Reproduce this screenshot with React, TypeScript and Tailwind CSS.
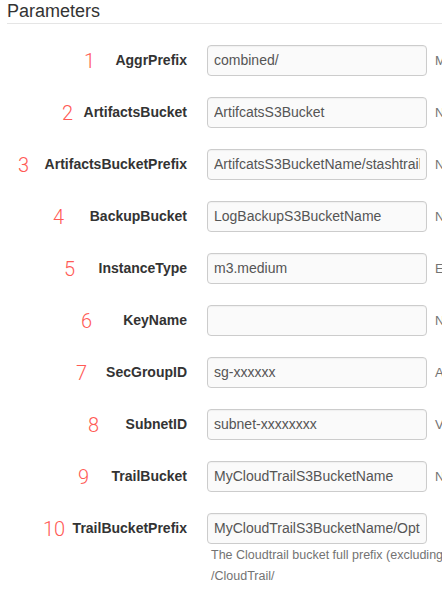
import React from "react";

type Row = { n: string; nx: number; label: string; value: string; help: string };

const rows: Row[] = [
  { n: "1", nx: 84, label: "AggrPrefix", value: "combined/", help: "Must end with a slash" },
  { n: "2", nx: 62, label: "ArtifactsBucket", value: "ArtifcatsS3Bucket", help: "Name of the artifacts bucket" },
  { n: "3", nx: 18, label: "ArtifactsBucketPrefix", value: "ArtifcatsS3BucketName/stashtrail/", help: "Name of the artifacts prefix" },
  { n: "4", nx: 53, label: "BackupBucket", value: "LogBackupS3BucketName", help: "Name of the backup bucket" },
  { n: "5", nx: 64, label: "InstanceType", value: "m3.medium", help: "EC2 instance type" },
  { n: "6", nx: 81, label: "KeyName", value: "", help: "Name of an existing key pair" },
  { n: "7", nx: 76, label: "SecGroupID", value: "sg-xxxxxx", help: "A security group ID" },
  { n: "8", nx: 88, label: "SubnetID", value: "subnet-xxxxxxxx", help: "VPC subnet ID" },
  { n: "9", nx: 78, label: "TrailBucket", value: "MyCloudTrailS3BucketName", help: "Name of the trail bucket" },
];

const sans = { fontFamily: '"Liberation Sans", Arial, sans-serif' };

function Num({ n, nx }: { n: string; nx: number }) {
  return (
    <span
      className="absolute top-1/2 -translate-y-1/2 text-[20px] leading-none font-light text-[#ff5a55]"
      style={{ left: nx, fontFamily: 'Roboto, "Liberation Sans", sans-serif' }}
    >
      {n}
    </span>
  );
}

function Field({ value }: { value: string }) {
  return (
    <div className="w-[220px] h-[31px] shrink-0 rounded-[4px] border border-[#cccccc] bg-[#fafafa] px-[6px] flex items-center shadow-[inset_0_1px_1px_rgba(0,0,0,0.04)]">
      <div className="w-full overflow-hidden text-[14px] text-[#555] whitespace-nowrap">{value}</div>
    </div>
  );
}

export default function App() {
  return (
    <div className="w-[442px] h-[589px] overflow-hidden bg-white pl-[7px]" style={sans}>
      <div className="h-[24px] border-b border-[#e5e5e5]">
        <h2 className="text-[18px] leading-[22px] text-[#333]">Parameters</h2>
      </div>
      <div className="mt-[21px] flex flex-col gap-[21px]">
        {rows.map((r) => (
          <div key={r.n} className="relative -ml-[7px] pl-[7px] flex items-center h-[31px]">
            <Num n={r.n} nx={r.nx} />
            <div className="w-[180px] shrink-0 text-right text-[14px] font-bold text-[#333] whitespace-nowrap">
              {r.label}
            </div>
            <div className="ml-[20px] shrink-0">
              <Field value={r.value} />
            </div>
            <div className="ml-[8px] shrink-0 text-[13px] text-[#737373] whitespace-nowrap">{r.help}</div>
          </div>
        ))}
        <div className="relative -ml-[7px] pl-[7px] flex items-start">
          <div className="relative shrink-0 flex items-center h-[31px]">
            <Num n="10" nx={36} />
            <div className="w-[180px] shrink-0 text-right text-[14px] font-bold text-[#333] whitespace-nowrap">
              TrailBucketPrefix
            </div>
          </div>
          <div className="ml-[20px] shrink-0 flex flex-col">
            <Field value="MyCloudTrailS3BucketName/Optional/" />
            <div className="mt-[1px] pl-[4px] text-[12.5px] leading-[21px] text-[#737373] whitespace-nowrap">
              <div>The Cloudtrail bucket full prefix (excluding region and account)</div>
              <div>/CloudTrail/</div>
            </div>
          </div>
        </div>
      </div>
    </div>
  );
}
